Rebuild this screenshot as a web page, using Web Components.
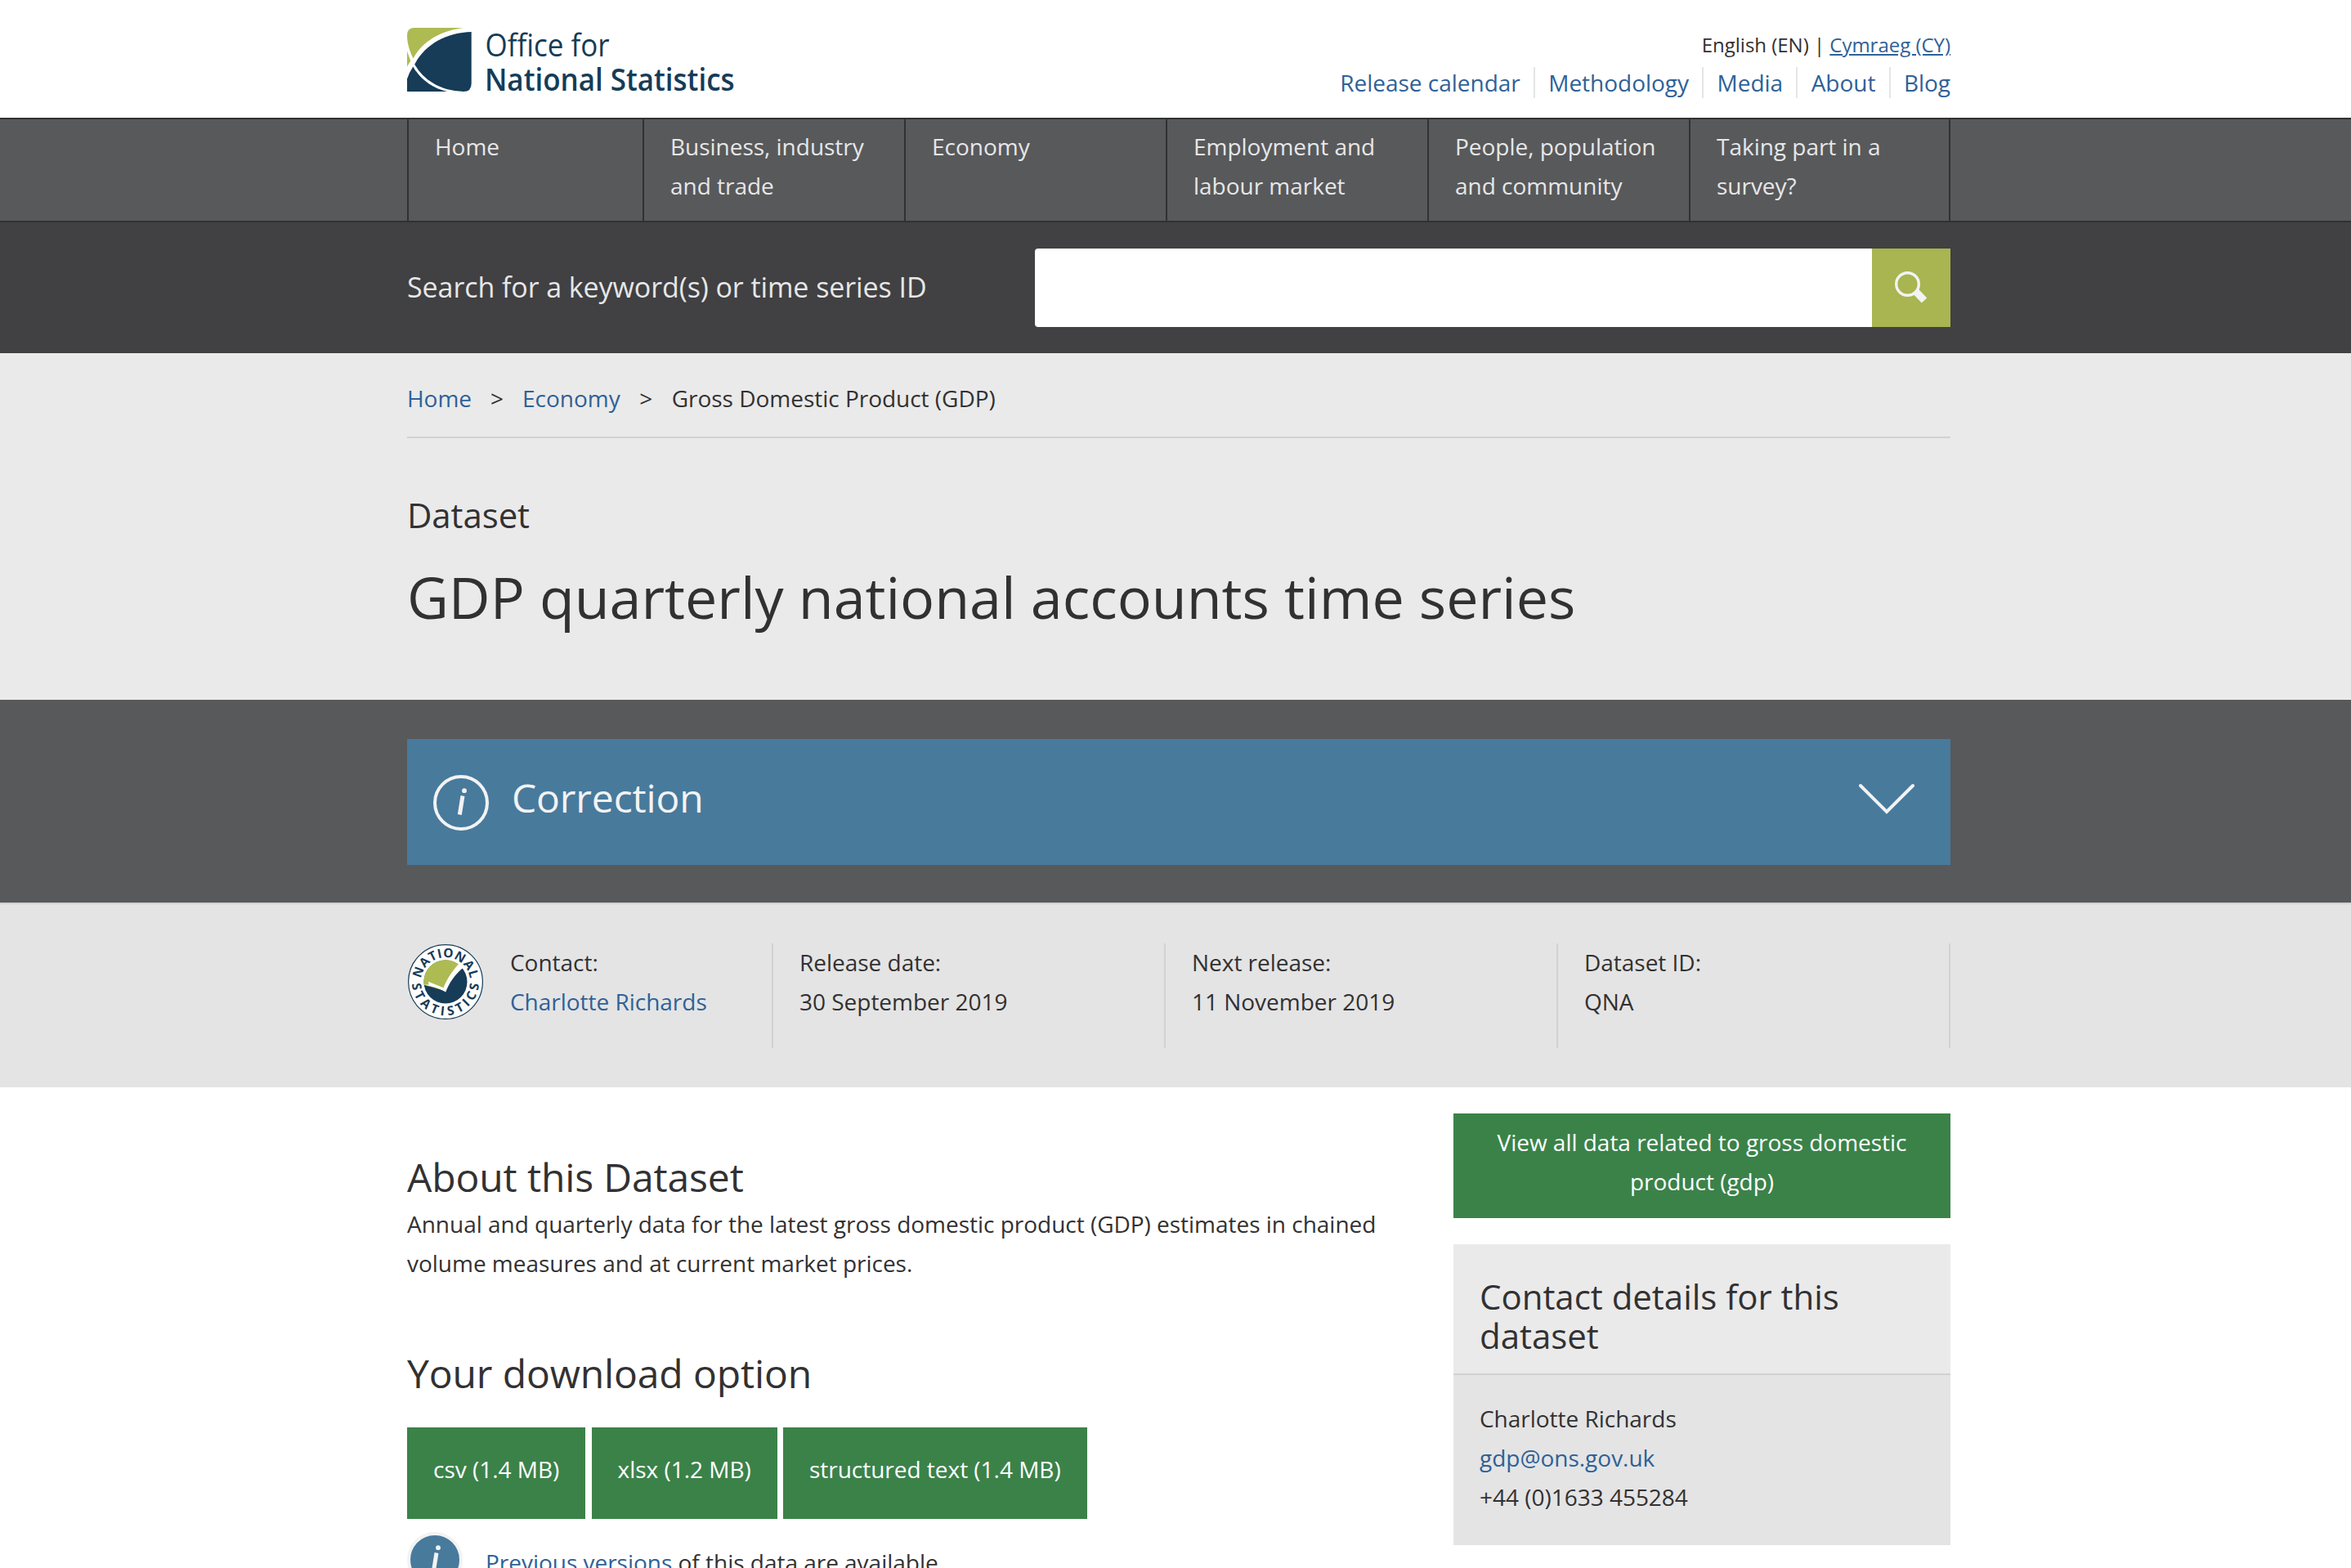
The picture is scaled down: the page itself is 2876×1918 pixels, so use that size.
<!DOCTYPE html>
<html lang="en">
<head>
<meta charset="utf-8">
<title>GDP quarterly national accounts time series - Office for National Statistics</title>
<style>
html,body{margin:0;padding:0}
body{font-family:"Open Sans",sans-serif;font-size:28px;line-height:48px;letter-spacing:-.02px;color:#323132;background:#fff;height:1918px;overflow:hidden;
--link:#2f6197;--green:#3b8249;--blue:#487a9c;--rule:#d0d2d3;--side:498px;--w:1888px}
</style>
</head>
<body>
<ons-page></ons-page>
<script>
const define = (name, html) => {
  const t = document.createElement('template');
  t.innerHTML = `<style>*{box-sizing:border-box}:host{display:block;box-sizing:border-box}a{color:var(--link);text-decoration:none}h1,h2,h3,p{margin:0;font-weight:400}svg{display:block;flex:none;overflow:visible}</style>` + html;
  customElements.define(name, class extends HTMLElement {
    constructor() {
      super();
      this.attachShadow({mode: 'open'}).appendChild(t.content.cloneNode(true));
    }
  });
};

define('ons-logo', `
<svg width="404" height="84" viewBox="0 0 404 84">
  <g fill="#aebb52"><path d="M0 9Q0 0 9 0H69.5C45 3 20 14 7.5 37.5C2.500 27 0 18 0 9Z"/><path d="M0 28.500L4.200 40.500L0 47.500Z"/></g>
  <g fill="#163c57"><path d="M78.700 5C48 6 22 20 9.200 44.700C19 62 38 77 69 78Q78.700 78 78.700 68Z"/><path d="M0 78V62.500Q3 54 7.300 47.500C16 63 31 74 49 78Z"/>
  <text x="95.500" y="34.500" font-size="38" font-weight="400" textLength="152" lengthAdjust="spacingAndGlyphs">Office for</text>
  <text x="95" y="76.700" font-size="37.500" font-weight="600" textLength="305.500" lengthAdjust="spacingAndGlyphs">National Statistics</text></g>
</svg>`);

define('ons-header', `<style>
:host{height:144px;padding:34px 490px 0 var(--side);display:flex;justify-content:space-between}
.r{display:flex;flex-direction:column;align-items:flex-end;padding-top:4px}
.lang{font-size:24px;line-height:34px}.lang a{text-decoration:underline}
nav{display:flex;margin-top:10px;line-height:38px}
nav a{padding:0 16.250px;border-right:2px solid #e4e5e6}
nav a:last-child{padding-right:0;border:0}
</style>
<ons-logo></ons-logo>
<div class="r"><div class="lang">English (EN) | <a href="#">Cymraeg (CY)</a></div>
<nav><a href="#">Release calendar</a><a href="#">Methodology</a><a href="#">Media</a><a href="#">About</a><a href="#">Blog</a></nav></div>`);

define('nav-item', `<style>:host{border-left:2px solid #323132;padding:9px 20px 0 32px;width:320px;color:#e6e7e8}</style><slot></slot>`);

define('ons-nav', `<style>
:host{height:128px;background:#58595b;border-top:2px solid #323132;border-bottom:2px solid #323132;padding:0 490px 0 var(--side);display:flex}
div{display:flex;width:var(--w);border-right:2px solid #323132}
nav-item:first-child{width:288px}nav-item:last-child{width:318px}
</style><div><nav-item>Home</nav-item><nav-item>Business, industry and trade</nav-item><nav-item>Economy</nav-item><nav-item>Employment and labour market</nav-item><nav-item>People, population and community</nav-item><nav-item>Taking part in a survey?</nav-item></div>`);

define('ons-search', `<style>
:host{height:160px;background:#414042;padding:32px 490px 32px var(--side);display:flex;color:#e6e7e8}
label{width:768px;font-size:34px;line-height:94px;letter-spacing:-.08px}
.field{flex:1;background:#fff;border-radius:4px 0 0 4px}
button{width:96px;border:0;padding:0;background:#a8b550}
</style><label>Search for a keyword(s) or time series ID</label><div class="field"></div>
<button aria-label="Search"><svg width="96" height="96" viewBox="0 0 96 96" fill="none" stroke="#f2f3f3"><circle cx="43.500" cy="43.500" r="13.800" stroke-width="3.400"/><path d="M54 53L64 63.500" stroke-width="9"/></svg></button>`);

define('ons-intro', `<style>
:host{height:424px;background:#eaeaea;padding:0 490px 0 var(--side)}
.crumbs{height:104px;padding-top:31px;border-bottom:2px solid var(--rule);display:flex}
.crumbs span{margin:0 23px}.crumbs .e{margin:0 23.500px}
h2{font-size:42px;line-height:64px;margin-top:62px;letter-spacing:-.1px}
h1{font-size:70px;line-height:96px;margin-top:20px}
</style><div class="crumbs"><a href="#">Home</a><span>&gt;</span><a href="#">Economy</a><span class="e">&gt;</span>Gross Domestic Product (GDP)</div>
<h2>Dataset</h2><h1>GDP quarterly national accounts time series</h1>`);

define('info-icon', `<style>circle.o{fill:var(--icon-fill,none)}</style>
<svg width="68" height="68" viewBox="0 0 68 68"><circle class="o" cx="34" cy="34" r="32" stroke="#f2f3f3" stroke-width="4"/><circle cx="38" cy="19.200" r="2.900" fill="#f2f3f3"/><path d="M36 25.500L32.300 48.500" stroke="#f2f3f3" stroke-width="5"/></svg>`);

define('ons-correction', `<style>
:host{height:248px;background:#58595b;padding:48px 490px 46px var(--side)}
div{height:154px;background:var(--blue);display:flex;padding:44px 42px 0 32px;color:#f2f3f3}
h2{font-size:48px;line-height:64px;letter-spacing:-.12px;margin:-4px 0 0 28px;flex:1}
svg{margin-top:8px}
</style><div><info-icon></info-icon><h2>Correction</h2>
<svg width="72" height="44" viewBox="0 0 72 44" fill="none" stroke="#f2f3f3" stroke-width="4" stroke-linecap="round"><path d="M4 5L36 37L68 5"/></svg></div>`);

define('national-badge', `
<svg width="92" height="92" viewBox="0 0 92 92"><circle cx="46" cy="46" r="45.400" fill="#fff" stroke="#163c57" stroke-width="1.200"/>
<circle cx="46" cy="46" r="26.500" fill="#163c57"/><path d="M19.800 49.800L45 57L62.500 25A26.500 26.500 0 0 0 19.800 49.800Z" fill="#aebb52"/>
<path d="M25 45.800L43.500 53.200C48 42 55 32 62.500 23.500L68 28.500C58 36 50 48 46.300 58.500C38 53.500 29 51 19.600 49.800L25.500 49.500Z" fill="#fff"/>
<path id="t" d="M16.500 52A30.100 30.100 0 1 1 75.500 52" fill="none"/><path id="b" d="M4.900 46A41.100 41.100 0 0 0 87.100 46" fill="none"/>
<g fill="#163c57" font-size="15.500" font-weight="700" text-anchor="middle"><text><textPath href="#t" startOffset="50%" textLength="86" lengthAdjust="spacing">NATIONAL</textPath></text>
<text><textPath href="#b" startOffset="50%" textLength="124" lengthAdjust="spacing">STATISTICS</textPath></text></g></svg>`);

define('meta-item', `<style>:host{width:480px;height:128px;padding-left:32px;border-right:2px solid var(--rule)}</style><slot></slot>`);

define('ons-meta', `<style>
:host{height:226px;background:#e4e4e4;border-top:2px solid var(--rule);padding:48px 490px 0 var(--side);display:flex}
.c{width:448px;height:128px;display:flex;gap:33px;padding:1px 0 0 1px;border-right:2px solid var(--rule)}
.c p{margin-top:-2px}
meta-item p{margin-top:-1px}
</style><div class="c"><national-badge></national-badge><p>Contact:<br><a href="#">Charlotte Richards</a></p></div>
<meta-item><p>Release date:<br>30 September 2019</p></meta-item><meta-item><p>Next release:<br>11 November 2019</p></meta-item><meta-item><p>Dataset ID:<br>QNA</p></meta-item>`);

define('ons-button', `<style>:host{background:var(--green);color:#fff;padding:27px 32px 0;height:112px}</style><slot></slot>`);

define('ons-about', `<style>
h2{font-size:48px;line-height:64px;letter-spacing:-.12px}
.a{margin-top:78px}.p{width:1220px;margin-top:1px}.d{margin-top:79px}
.row{display:flex;gap:7.300px;margin-top:34px}
.prev{display:flex;gap:28px;margin-top:16px;--icon-fill:var(--blue)}.prev p{margin-top:13px}
</style><h2 class="a">About this Dataset</h2>
<p class="p">Annual and quarterly data for the latest gross domestic product (GDP) estimates in chained volume measures and at current market prices.</p>
<h2 class="d">Your download option</h2>
<div class="row"><ons-button>csv (1.4 MB)</ons-button><ons-button>xlsx (1.2 MB)</ons-button><ons-button>structured text (1.4 MB)</ons-button></div>
<div class="prev"><info-icon></info-icon><p><a href="#">Previous versions</a> of this data are available.</p></div>`);

define('ons-aside', `<style>
:host{width:608px;padding-top:32px}
.view{background:var(--green);color:#fff;height:128px;padding:11px 32px 0;text-align:center}
h3{margin-top:32px;height:160px;background:#eaeaea;border-bottom:2px solid var(--rule);padding:40px 32px 0;font-size:42px;line-height:48px}
.b{background:#e4e4e4;height:208px;padding:29px 32px 0}
</style><div class="view">View all data related to gross domestic product (gdp)</div>
<h3>Contact details for this dataset</h3><div class="b"><p>Charlotte Richards</p><p><a href="#">gdp@ons.gov.uk</a></p><p>+44 (0)1633 455284</p></div>`);

define('ons-main', `<style>:host{display:flex;justify-content:space-between;padding:0 490px 0 var(--side)}</style><ons-about></ons-about><ons-aside></ons-aside>`);

define('ons-page', `<ons-header></ons-header><ons-nav></ons-nav><ons-search></ons-search><ons-intro></ons-intro><ons-correction></ons-correction><ons-meta></ons-meta><ons-main></ons-main>`);
</script>
</body>
</html>
